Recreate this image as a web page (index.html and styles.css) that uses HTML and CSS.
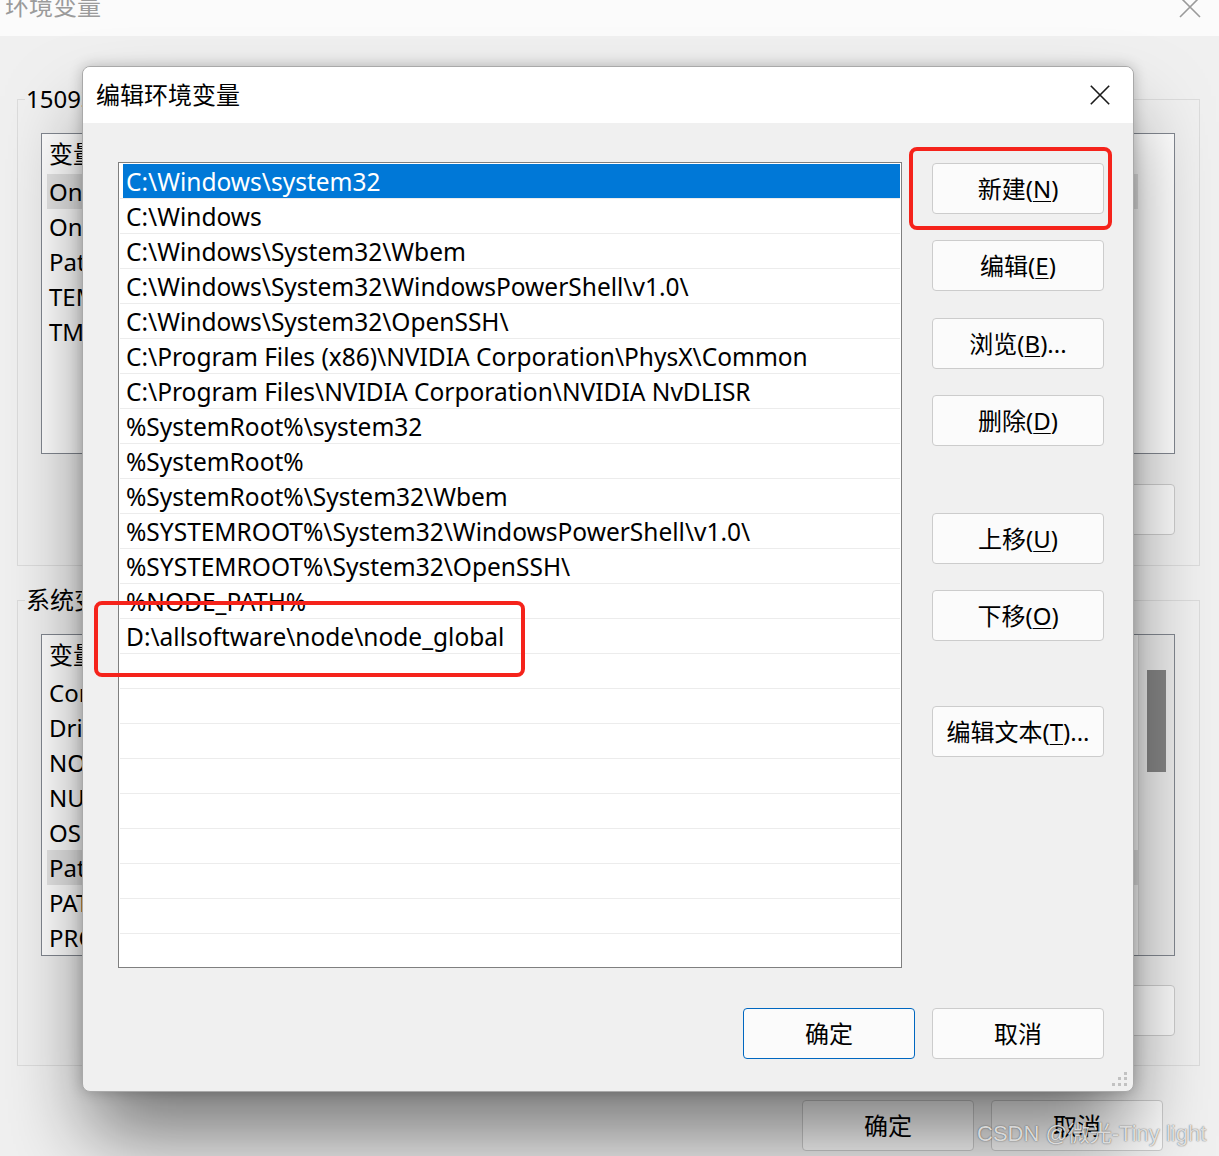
FILE: index.html
```html
<!DOCTYPE html>
<html lang="zh-CN">
<head>
<meta charset="utf-8">
<title>编辑环境变量</title>
<link rel="stylesheet" href="styles.css">
</head>
<body>
<div class="bgwin">
  <div class="bg-titlebar">
    <span class="bg-title">环境变量</span>
    <svg class="bg-close" width="22" height="22" viewBox="0 0 22 22"><path d="M1 1L21 21M21 1L1 21" stroke="#9a9a9a" stroke-width="1.6" fill="none"/></svg>
  </div>
  <div class="bg-body">
    <fieldset class="group g1">
      <legend>15093的用户变量(U)</legend>
      <div class="vlist">
        <div class="vcols">
          <div class="vhead">变量</div>
          <div class="vrow hl">OneDrive</div>
          <div class="vrow">OneDriveConsumer</div>
          <div class="vrow">Path</div>
          <div class="vrow">TEMP</div>
          <div class="vrow">TMP</div>
        </div>
        <div class="vscroll"></div>
      </div>
      <div class="grp-btns">
        <button class="btn">新建(N)...</button>
        <button class="btn">编辑(E)...</button>
        <button class="btn">删除(D)</button>
      </div>
    </fieldset>
    <fieldset class="group g2">
      <legend>系统变量(S)</legend>
      <div class="vlist l2">
        <div class="vcols">
          <div class="vhead">变量</div>
          <div class="vrow">ComSpec</div>
          <div class="vrow">DriverData</div>
          <div class="vrow">NODE_PATH</div>
          <div class="vrow">NUMBER_OF_PROCESSORS</div>
          <div class="vrow">OS</div>
          <div class="vrow hl">Path</div>
          <div class="vrow">PATHEXT</div>
          <div class="vrow">PROCESSOR_ARCHITECTURE</div>
        </div>
        <div class="vscroll"><div class="thumb"></div></div>
      </div>
      <div class="grp-btns">
        <button class="btn">新建(W)...</button>
        <button class="btn">编辑(I)...</button>
        <button class="btn">删除(L)</button>
      </div>
    </fieldset>
    <div class="bg-footer">
      <button class="btn">确定</button>
      <button class="btn">取消</button>
    </div>
  </div>
</div>

<div class="dialog">
  <div class="dlg-titlebar">
    <span class="dlg-title">编辑环境变量</span>
    <svg class="dlg-close" width="20" height="20" viewBox="0 0 20 20"><path d="M0.8 0.8L19.2 19.2M19.2 0.8L0.8 19.2" stroke="#1a1a1a" stroke-width="1.6" fill="none"/></svg>
  </div>
  <div class="dlg-body">
    <div class="dlg-main">
      <div class="pathlist">
        <div class="prow sel">C:\Windows\system32</div>
        <div class="prow">C:\Windows</div>
        <div class="prow">C:\Windows\System32\Wbem</div>
        <div class="prow">C:\Windows\System32\WindowsPowerShell\v1.0\</div>
        <div class="prow">C:\Windows\System32\OpenSSH\</div>
        <div class="prow">C:\Program Files (x86)\NVIDIA Corporation\PhysX\Common</div>
        <div class="prow">C:\Program Files\NVIDIA Corporation\NVIDIA NvDLISR</div>
        <div class="prow">%SystemRoot%\system32</div>
        <div class="prow">%SystemRoot%</div>
        <div class="prow">%SystemRoot%\System32\Wbem</div>
        <div class="prow">%SYSTEMROOT%\System32\WindowsPowerShell\v1.0\</div>
        <div class="prow">%SYSTEMROOT%\System32\OpenSSH\</div>
        <div class="prow">%NODE_PATH%</div>
        <div class="prow">D:\allsoftware\node\node_global</div>
        <div class="prow"></div>
        <div class="prow"></div>
        <div class="prow"></div>
        <div class="prow"></div>
        <div class="prow"></div>
        <div class="prow"></div>
        <div class="prow"></div>
        <div class="prow"></div>
        <div class="prow"></div>
      </div>
      <div class="side">
        <button class="btn sb s-new">新建(<u>N</u>)</button>
        <button class="btn sb s-edit">编辑(<u>E</u>)</button>
        <button class="btn sb s-browse">浏览(<u>B</u>)...</button>
        <button class="btn sb s-del">删除(<u>D</u>)</button>
        <button class="btn sb s-up">上移(<u>U</u>)</button>
        <button class="btn sb s-down">下移(<u>O</u>)</button>
        <button class="btn sb s-text">编辑文本(<u>T</u>)...</button>
      </div>
    </div>
    <div class="dlg-footer">
      <button class="btn sb primary">确定</button>
      <button class="btn sb">取消</button>
    </div>
  </div>
  <svg class="grip" width="16" height="15" viewBox="0 0 16 15">
    <rect x="12" y="0" width="3" height="3" fill="#c2c2c2"/>
    <rect x="6" y="5" width="3" height="3" fill="#c2c2c2"/>
    <rect x="12" y="5" width="3" height="3" fill="#c2c2c2"/>
    <rect x="0" y="11" width="3" height="3" fill="#c2c2c2"/>
    <rect x="6" y="11" width="3" height="3" fill="#c2c2c2"/>
    <rect x="12" y="11" width="3" height="3" fill="#c2c2c2"/>
  </svg>
</div>

<div class="mark mark-new"></div>
<div class="mark mark-path"></div>
<div class="watermark">CSDN @微光-Tiny light</div>
</body>
</html>
```

FILE: styles.css
```css
* { box-sizing: border-box; }
html, body { margin: 0; padding: 0; }
body {
  width: 1219px;
  height: 1156px;
  overflow: hidden;
  position: relative;
  background: #f0f0f0;
  font-family: "Noto Sans", "Noto Sans CJK SC", sans-serif;
  font-size: 24px;
  color: #000;
}

/* ---------- background window ---------- */
.bg-titlebar {
  height: 36px;
  background: #fbfbfb;
  display: flex;
  justify-content: space-between;
  align-items: flex-start;
  padding: 0 18px 0 5px;
  overflow: hidden;
}
.bg-title {
  color: #9b9b9b;
  line-height: 24px;
  margin-top: -6px;
}
.bg-close { margin-top: -4px; }

.bg-body { padding: 51px 19px 0 17px; }

fieldset.group {
  margin: 0;
  padding: 0 24px 30px 23px;
  border: 1px solid #dcdcdc;
  min-inline-size: 0;
}
.group legend {
  padding: 0 1px;
  margin-left: -16px;
  line-height: 24px;
  height: 24px;
}
fieldset.g2 {
  margin-top: 22px;
  padding-bottom: 29px;
}

.vlist {
  margin-top: 22px;
  height: 321px;
  border: 1px solid #828790;
  background: #fff;
  display: flex;
  overflow: hidden;
}
.l2 { height: 322px; }
.vcols { flex: 1; }
.vhead {
  height: 40px;
  line-height: 40px;
  padding-left: 7px;
}
.vrow {
  height: 35px;
  line-height: 35px;
  margin-left: 5px;
  padding-left: 2px;
  white-space: nowrap;
}
.vrow.hl { background: #e5e5e5; }
.vscroll { width: 36px; }
.l2 .vscroll {
  background: #ececec;
  border-left: 1px solid #dedede;
  padding-top: 35px;
}
.thumb {
  margin-left: 8px;
  width: 19px;
  height: 102px;
  background: #858585;
}

.grp-btns {
  margin-top: 30px;
  display: flex;
  justify-content: flex-end;
  gap: 17px;
}
.g2 .grp-btns { margin-top: 29px; }

.bg-footer {
  margin-top: 34px;
  display: flex;
  justify-content: flex-end;
  gap: 17px;
  padding-right: 37px;
}

.btn {
  width: 172px;
  height: 51px;
  border: 1px solid #cccccc;
  border-radius: 4px;
  background: #fbfbfb;
  font-family: inherit;
  font-size: 24px;
  color: #000;
  padding: 0;
  line-height: 1;
}
.btn u { text-underline-offset: 3px; text-decoration-thickness: 1px; }

/* ---------- dialog ---------- */
.dialog {
  position: absolute;
  left: 82px;
  top: 66px;
  width: 1052px;
  height: 1026px;
  border: 1px solid #a9a9a9;
  border-radius: 8px;
  background: #f0f0f0;
  box-shadow: 0 0 14px rgba(0, 0, 0, 0.22), 0 50px 80px -6px rgba(0, 0, 0, 0.5);
  display: flex;
  flex-direction: column;
}
.dlg-titlebar {
  height: 56px;
  background: #fff;
  border-radius: 7px 7px 0 0;
  display: flex;
  align-items: center;
  justify-content: space-between;
  padding: 0 23px 0 13px;
}
.dlg-title { line-height: 28px; }
.dlg-close { display: block; }

.dlg-body {
  flex: 1;
  padding: 39px 29px 32px 35px;
  display: flex;
  flex-direction: column;
}
.dlg-main {
  display: flex;
  gap: 30px;
}
.pathlist {
  width: 784px;
  height: 806px;
  border: 1px solid #7f7f7f;
  background: #fff;
  padding: 1px;
  overflow: hidden;
}
.prow {
  height: 35px;
  line-height: 35px;
  font-size: 24.5px;
  border-bottom: 1px solid #ececec;
  padding-left: 6px;
  white-space: nowrap;
}
.prow.sel {
  background: linear-gradient(to right, transparent 3px, #0078d7 3px);
  color: #fff;
}

.side {
  width: 172px;
  display: flex;
  flex-direction: column;
}
.sb { flex: none; }
.s-new { margin-top: 1px; }
.s-edit { margin-top: 26px; }
.s-browse { margin-top: 27px; }
.s-del { margin-top: 26px; }
.s-up { margin-top: 67px; }
.s-down { margin-top: 26px; }
.s-text { margin-top: 65px; }

.dlg-footer {
  margin-top: 40px;
  display: flex;
  justify-content: flex-end;
  gap: 17px;
}
.btn.primary { border-color: #0067c0; }

.grip {
  position: absolute;
  right: 5px;
  bottom: 4px;
}

/* ---------- annotations ---------- */
.mark {
  position: absolute;
  border: 4px solid #f5231b;
  border-radius: 8px;
}
.mark-new { left: 909px; top: 147px; width: 203px; height: 83px; }
.mark-path { left: 94px; top: 601px; width: 431px; height: 76px; }

.watermark {
  position: absolute;
  left: 977px;
  top: 1120px;
  font-family: "Liberation Sans", "Noto Sans CJK SC", sans-serif;
  font-size: 22px;
  line-height: 28px;
  color: rgba(255, 255, 255, 0.8);
  text-shadow: 0 0 1px rgba(0, 0, 0, 0.55), 0 0 2px rgba(0, 0, 0, 0.25);
  white-space: nowrap;
}
```
